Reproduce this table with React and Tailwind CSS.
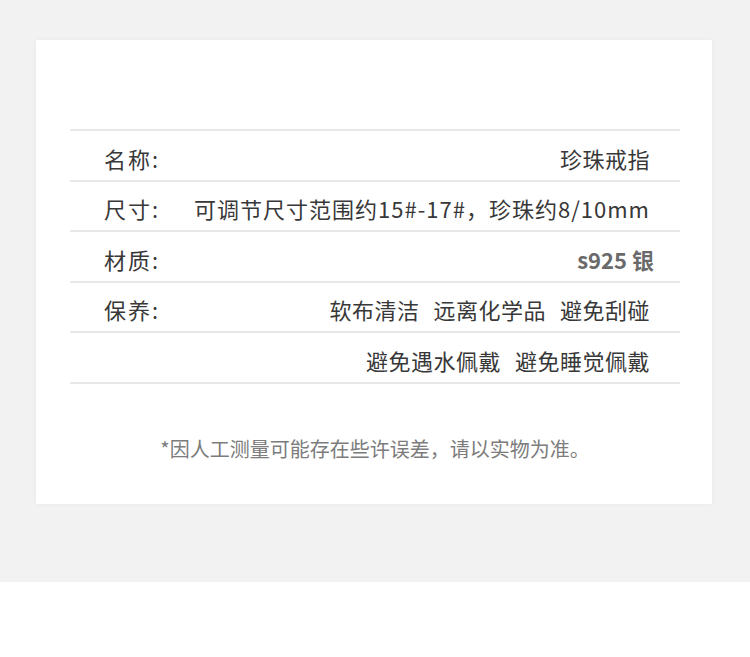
const font = { fontFamily: '"Noto Sans CJK SC", "Noto Sans", sans-serif' };

const rows = [
  { label: '名称:', value: '珍珠戒指' },
  { label: '尺寸:', value: '可调节尺寸范围约15#-17#，珍珠约8/10mm', spread: true },
  { label: '材质:', value: 's925 银', bold: true },
  { label: '保养:', value: ['软布清洁', '远离化学品', '避免刮碰'] },
  { label: '', value: ['避免遇水佩戴', '避免睡觉佩戴'] },
];

function Row({ label, value, spread, bold }) {
  return (
    <div className="flex h-[50.5px] items-center justify-between border-b-2 border-[#e8e8e8] pl-[34px] pr-[30px] pt-[6px] text-[22px] text-[#383838]">
      <span className="tracking-[2px]">{label}</span>
      {bold ? (
        <span className="mr-[-4px] font-bold text-[#6a6a6a]">{value}</span>
      ) : Array.isArray(value) ? (
        <span className="flex gap-[14px] tracking-[0.5px]">
          {value.map((v) => (
            <span key={v}>{v}</span>
          ))}
        </span>
      ) : (
        <span className={spread ? 'tracking-[1px]' : 'tracking-[0.5px]'}>{value}</span>
      )}
    </div>
  );
}

export default function App() {
  return (
    <div className="h-[657px] w-[750px] bg-white" style={font}>
      <div className="bg-[#f2f2f2] pb-[78px] pl-[36px] pr-[38px] pt-[40px]">
        <div className="h-[464px] bg-white pl-[34px] pr-[32px] pt-[89px] shadow-[0_0_6px_rgba(0,0,0,0.04)]">
          <div className="border-t-2 border-[#e8e8e8]">
            {rows.map((r, i) => (
              <Row key={i} {...r} />
            ))}
          </div>
          <p className="mt-[50px] text-center text-[20px] text-[#7c7c7c]">
            *因人工测量可能存在些许误差，请以实物为准。
          </p>
        </div>
      </div>
    </div>
  );
}
